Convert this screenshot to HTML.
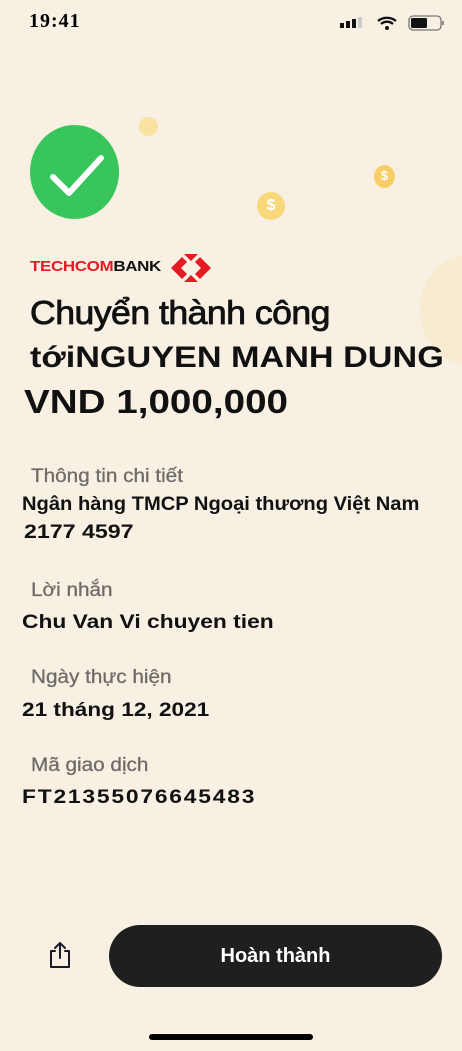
<!DOCTYPE html><html><head><meta charset="utf-8"><style>
body{margin:0;width:462px;height:1051px;overflow:hidden;background:#f7f0e3;font-family:"Liberation Sans",sans-serif;position:relative}
.a{position:absolute;white-space:nowrap;transform-origin:left}
.lab{color:#6f6c68;font-size:19px;left:31px;transform:scaleX(1.09);-webkit-text-stroke:.3px #6f6c68}
.val{color:#111;font-size:19px;font-weight:bold;left:22px;transform:scaleX(1.06)}
</style></head><body>
<div class="a" style="left:29px;top:10px;font-family:'Liberation Serif',serif;font-weight:bold;font-size:20px;letter-spacing:1px">19:41</div>
<svg class="a" style="left:338px;top:14px" width="110" height="20">
<rect x="2" y="9" width="4" height="5" fill="#111"/><rect x="8" y="7" width="4" height="7" fill="#111"/><rect x="14" y="5" width="4" height="9" fill="#111"/><rect x="20" y="3" width="4" height="11" fill="#ccc"/>
<path d="M40 7a14 14 0 0 1 18 0M43 10a9 9 0 0 1 12 0" stroke="#111" stroke-width="2.3" fill="none"/><circle cx="49" cy="14" r="2" fill="#111"/>
<rect x="71" y="2" width="32" height="14" rx="4" fill="none" stroke="#777" stroke-width="1.3"/><rect x="73" y="4" width="16" height="10" rx="1.5" fill="#111"/><rect x="104" y="7" width="2" height="4" fill="#888"/>
</svg>
<div class="a" style="left:139px;top:117px;width:19px;height:19px;border-radius:50%;background:#fae2a0"></div>
<div class="a" style="left:257px;top:192px;width:28px;height:28px;border-radius:50%;background:#f9d87a;color:#fff;font-weight:bold;font-size:16px;text-align:center;line-height:28px">$</div>
<div class="a" style="left:374px;top:165px;width:21px;height:23px;border-radius:50%;background:#f8cf66;color:#fff;font-weight:bold;font-size:13px;text-align:center;line-height:22px">$</div>
<div class="a" style="left:420px;top:255px;width:100px;height:110px;border-radius:50%;background:#f6e8c8;opacity:.7"></div>
<div class="a" style="left:30px;top:125px;width:89px;height:94px;border-radius:50%;background:#38c55c"></div>
<svg class="a" style="left:30px;top:125px" width="89" height="94"><path d="M23 52l16 16 32-35" stroke="#fff" stroke-width="6" fill="none" stroke-linecap="round" stroke-linejoin="round"/></svg>
<div class="a" style="left:30px;top:258px;font-weight:bold;font-size:15px;letter-spacing:-.3px;transform:scaleX(1.13)"><span style="color:#e31b23">TECHCOM</span><span style="color:#111">BANK</span></div>
<svg class="a" style="left:171px;top:254px" width="40" height="28"><path d="M0 14L11 3l5 5-6 6 6 6-5 5zM40 14L29 3l-5 5 6 6-6 6 5 5zM13 0h14l-7 7zM13 28h14l-7-7z" fill="#e31b23"/></svg>
<div class="a" style="left:30px;top:294px;font-size:33px;color:#111;letter-spacing:-.5px;transform:scaleX(1.08);-webkit-text-stroke:.8px #111">Chuyển thành công</div>
<div class="a" style="left:30px;top:341px;font-size:30px;font-weight:bold;color:#111;transform:scaleX(1.14)">tới<span>NGUYEN MANH DUNG</span></div>
<div class="a" style="left:24px;top:383px;font-size:33px;font-weight:bold;color:#111;transform:scaleX(1.17)">VND 1,000,000</div>
<div class="a lab" style="top:466px">Thông tin chi tiết</div>
<div class="a val" style="top:494px">Ngân hàng TMCP Ngoại thương Việt Nam</div>
<div class="a val" style="top:522px;left:24px;transform:scaleX(1.22)">2177 4597</div>
<div class="a lab" style="top:580px">Lời nhắn</div>
<div class="a val" style="top:612px;transform:scaleX(1.2)">Chu Van Vi chuyen tien</div>
<div class="a lab" style="top:667px">Ngày thực hiện</div>
<div class="a val" style="top:700px;transform:scaleX(1.19)">21 tháng 12, 2021</div>
<div class="a lab" style="top:755px">Mã giao dịch</div>
<div class="a val" style="top:787px;letter-spacing:1.5px;transform:scaleX(1.2)">FT21355076645483</div>
<svg class="a" style="left:46px;top:940px" width="28" height="30"><path d="M9 11H5v16h18V11h-4M14 3v15M9 8l5-5 5 5" stroke="#1a1a2a" stroke-width="2" fill="none" stroke-linejoin="round" stroke-linecap="round"/></svg>
<div class="a" style="left:109px;top:925px;width:333px;height:62px;border-radius:31px;background:#1f1f1f;color:#fff;font-size:20px;font-weight:bold;text-align:center;line-height:62px">Hoàn thành</div>
<div class="a" style="left:149px;top:1034px;width:164px;height:6px;border-radius:3px;background:#000"></div>
</body></html>
